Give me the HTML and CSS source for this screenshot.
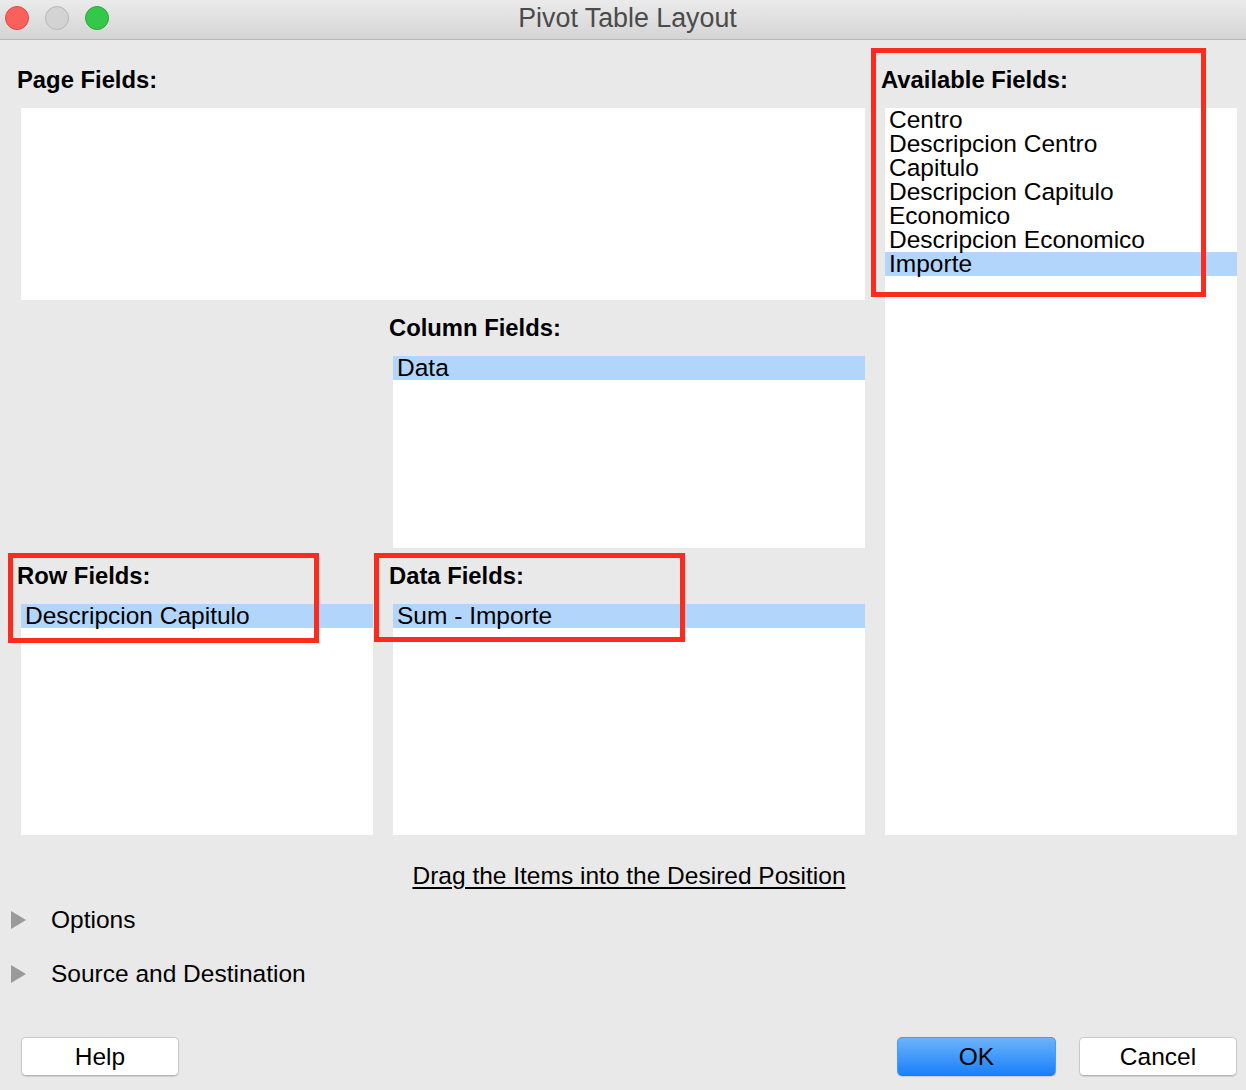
FILE: index.html
```html
<!DOCTYPE html>
<html lang="en">
<head>
    <meta charset="UTF-8">
    <meta name="viewport" content="width=device-width, initial-scale=1.0">
    <title>Pivot Table Layout</title>
    <link rel="stylesheet" href="styles.css">
</head>
<body>
    <div class="titlebar">
        <div class="lights">
            <span class="light close"></span>
            <span class="light mini"></span>
            <span class="light zoom"></span>
        </div>
        <div class="wintitle">Pivot Table Layout</div>
    </div>

    <div class="fields">
        <div class="field pageArea">
            <div class="fieldLabel">Page Fields:</div>
            <div class="listbox"></div>
        </div>
        <div class="field availArea">
            <div class="fieldLabel">Available Fields:</div>
            <div class="listbox">
                <div class="item">Centro</div>
                <div class="item">Descripcion Centro</div>
                <div class="item">Capitulo</div>
                <div class="item">Descripcion Capitulo</div>
                <div class="item">Economico</div>
                <div class="item">Descripcion Economico</div>
                <div class="item selected">Importe</div>
            </div>
        </div>
        <div class="field columnArea">
            <div class="fieldLabel">Column Fields:</div>
            <div class="listbox">
                <div class="item selected">Data</div>
            </div>
        </div>
        <div class="field rowArea">
            <div class="fieldLabel">Row Fields:</div>
            <div class="listbox">
                <div class="item selected">Descripcion Capitulo</div>
            </div>
        </div>
        <div class="field dataArea">
            <div class="fieldLabel">Data Fields:</div>
            <div class="listbox">
                <div class="item selected">Sum - Importe</div>
            </div>
        </div>
    </div>

    <div class="hint"><span>Drag the Items into the Desired Position</span></div>

    <div class="expander"><span class="arrow"></span>Options</div>
    <div class="expander"><span class="arrow"></span>Source and Destination</div>

    <div class="buttons">
        <button class="btn">Help</button>
        <div class="rightButtons">
            <button class="btn primary">OK</button>
            <button class="btn">Cancel</button>
        </div>
    </div>

    <!-- annotation boxes drawn over the dialog -->
    <div class="mark markAvail"></div>
    <div class="mark markRow"></div>
    <div class="mark markData"></div>
</body>
</html>
```

FILE: styles.css
```css
body{
    margin: 0px;
    padding: 0px;
    background-color: #e9e9e9;
    font-family: "Liberation Sans", Arial, sans-serif;
    font-size: 24.5px;
    color: black;
    position: relative;
    height: 1090px;
    overflow: hidden;
}
.titlebar{
    height: 39px;
    border-bottom: 1px solid #b9b9b9;
    background: linear-gradient(#ebebeb, #d4d4d4);
    display: flex;
    align-items: center;
    position: relative;
}
.lights{
    display: flex;
    gap: 16px;
    padding-left: 5px;
    margin-top: -4px;
}
.light{
    width: 22px;
    height: 22px;
    border-radius: 50%;
    border: 1px solid;
    display: block;
}
.close{
    background-color: #fc605c;
    border-color: #df4744;
}
.mini{
    background-color: #d3d3d3;
    border-color: #b6b6b6;
}
.zoom{
    background-color: #34c84a;
    border-color: #27a83a;
}
.wintitle{
    flex: 1;
    text-align: center;
    margin-left: -100px;
    margin-top: -2px;
    color: #4b4b4b;
    font-size: 26.8px;
}

.fields{
    display: grid;
    grid-template-columns: 352px 472px 352px;
    grid-template-rows: 240px 240px 279px;
    column-gap: 20px;
    row-gap: 8px;
    padding: 20px 0px 0px 21px;
}
.field{
    display: flex;
    flex-direction: column;
}
.pageArea{
    grid-column: 1 / 3;
    grid-row: 1;
}
.availArea{
    grid-column: 3;
    grid-row: 1 / 4;
}
.columnArea{
    grid-column: 2;
    grid-row: 2;
}
.rowArea{
    grid-column: 1;
    grid-row: 3;
}
.dataArea{
    grid-column: 2;
    grid-row: 3;
}
.fieldLabel{
    height: 48px;
    line-height: 40px;
    margin-left: -4px;
    font-weight: bold;
    font-size: 23.8px;
}
.listbox{
    flex: 1;
    background-color: white;
}
.item{
    height: 24px;
    line-height: 24px;
    padding-left: 4px;
    white-space: nowrap;
}
.selected{
    background-color: #b2d6fb;
}

.hint{
    text-align: center;
    padding-left: 21px;
    padding-right: 9px;
    margin-top: 27px;
    margin-bottom: 3px;
    line-height: 28px;
}
.hint span{
    text-decoration: underline;
    text-underline-offset: 3px;
}
.expander{
    display: flex;
    align-items: center;
    height: 54px;
    padding-left: 11px;
}
.arrow{
    width: 0px;
    height: 0px;
    border-top: 9px solid transparent;
    border-bottom: 9px solid transparent;
    border-left: 15px solid #9a9a9a;
    margin-right: 25px;
}

.buttons{
    display: flex;
    justify-content: space-between;
    padding: 0px 9px 0px 21px;
    margin-top: 36px;
}
.rightButtons{
    display: flex;
    gap: 23px;
}
.btn{
    width: 158px;
    height: 39px;
    font-family: "Liberation Sans", Arial, sans-serif;
    font-size: 24.5px;
    color: black;
    background-color: white;
    border: 1px solid #c9c9c9;
    border-bottom-color: #b3b3b3;
    border-radius: 5px;
    box-shadow: 0px 1px 1px rgba(0,0,0,0.12);
    padding: 0px;
}
.primary{
    width: 159px;
    background: linear-gradient(#6cb3fa, #1a80fb);
    border-color: #4a9af7;
    border-bottom-color: #2a78e6;
}

.mark{
    position: absolute;
    border: 5px solid #fd2b1e;
    box-sizing: border-box;
}
.markAvail{
    left: 871px;
    top: 48px;
    width: 335px;
    height: 249px;
}
.markRow{
    left: 8px;
    top: 553px;
    width: 311px;
    height: 90px;
}
.markData{
    left: 374px;
    top: 553px;
    width: 311px;
    height: 89px;
}
```
